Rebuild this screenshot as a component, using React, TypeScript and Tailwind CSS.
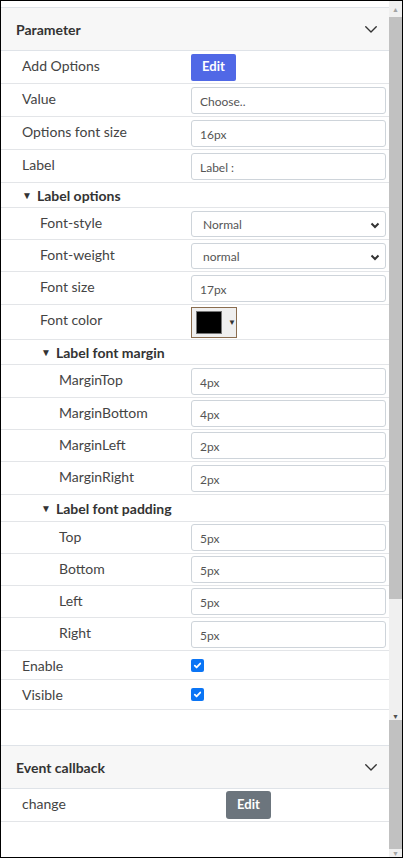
import type { ReactNode } from 'react'

const FONT = { fontFamily: 'Lato, "Noto Sans", sans-serif' }

function Chevron() {
  return (
    <svg width="14" height="14" viewBox="0 0 16 16" fill="none" stroke="#333" strokeWidth="1.6" strokeLinecap="round" strokeLinejoin="round">
      <path d="M2 5.5l6 6 6-6" />
    </svg>
  )
}

function SectionHeader({ title }: { title: string }) {
  return (
    <div className="flex h-[44px] items-center justify-between border-y border-[#dfe3e8] bg-[#f7f7f7] pl-[15px] pr-[11px]">
      <span className="text-[14px] font-bold text-[#333]">{title}</span>
      <Chevron />
    </div>
  )
}

function Row({ label, indent = 0, children, h = 'h-[33px]' }: {
  label: string; indent?: number; children?: ReactNode; h?: string
}) {
  const pad = indent === 0 ? 'pl-[21px]' : indent === 1 ? 'pl-[39px]' : 'pl-[58px]'
  return (
    <div className={`grid grid-cols-[190px_1fr] border-b border-[#e3e5e8] ${h}`}>
      <div className={`pt-[4px] text-[14px] text-[#444] ${pad}`}>{label}</div>
      <div className="flex items-center pr-[3px]">{children}</div>
    </div>
  )
}

function TextBox({ value }: { value: string }) {
  return (
    <div className="flex h-[27px] w-full items-center rounded-[3px] border border-[#ced4da] bg-white px-[8px] pt-[3px] text-[12px] text-[#555]">
      {value}
    </div>
  )
}

function SelectBox({ value }: { value: string }) {
  return (
    <div className="flex h-[26px] w-full items-center justify-between rounded-[3px] border border-[#ced4da] bg-white pl-[11px] pr-[5px] pt-[3px] text-[12px] text-[#555]">
      <span>{value}</span>
      <svg width="10" height="10" viewBox="0 0 10 10" fill="none" stroke="#333" strokeWidth="2">
        <path d="M1.5 3.5l3.5 3.5 3.5-3.5" />
      </svg>
    </div>
  )
}

function Group({ title, indent, h = 'h-[25px]' }: { title: string; indent: number; h?: string }) {
  return (
    <div className={`flex items-center gap-[5px] border-b border-[#e3e5e8] text-[14px] font-bold text-[#333] ${h} ${indent === 0 ? 'pl-[21px]' : 'pl-[40px]'}`}>
      <span className="text-[10px]">▼</span>
      <span>{title}</span>
    </div>
  )
}

function Check() {
  return (
    <span className="flex h-[13px] w-[13px] items-center justify-center rounded-[2px] bg-[#0b75f5]">
      <svg width="9" height="9" viewBox="0 0 10 10" fill="none" stroke="white" strokeWidth="2" strokeLinecap="round" strokeLinejoin="round">
        <path d="M2 5.2l2 2 4-4.4" />
      </svg>
    </span>
  )
}

export default function App() {
  return (
    <div className="flex h-[858px] w-[403px] overflow-hidden border border-black bg-white" style={FONT}>
      <div className="flex min-w-0 flex-1 flex-col pt-[6px]">
        <SectionHeader title="Parameter" />
        <Row label="Add Options">
          <button className="h-[27px] w-[45px] rounded-[2px] bg-[#5068e6] text-[13px] font-bold text-white">Edit</button>
        </Row>
        <Row label="Value"><TextBox value="Choose.." /></Row>
        <Row label="Options font size"><TextBox value="16px" /></Row>
        <Row label="Label"><TextBox value="Label :" /></Row>
        <Group title="Label options" indent={0} />
        <Row label="Font-style" indent={1} h="h-[32px]"><SelectBox value="Normal" /></Row>
        <Row label="Font-weight" indent={1} h="h-[32px]"><SelectBox value="normal" /></Row>
        <Row label="Font size" indent={1} h="h-[33px]"><TextBox value="17px" /></Row>
        <Row label="Font color" indent={1} h="h-[35px]">
          <div className="flex h-[31px] w-[46px] items-center gap-[6px] border border-[#8a6d4f] bg-[#efefef] pl-[4px]">
            <span className="h-[23px] w-[26px] border border-[#777] bg-black" />
            <span className="text-[8px] text-[#333]">▼</span>
          </div>
        </Row>
        <Group title="Label font margin" indent={1} />
        <Row label="MarginTop" indent={2} h="h-[33px]"><TextBox value="4px" /></Row>
        <Row label="MarginBottom" indent={2} h="h-[32px]"><TextBox value="4px" /></Row>
        <Row label="MarginLeft" indent={2} h="h-[32px]"><TextBox value="2px" /></Row>
        <Row label="MarginRight" indent={2} h="h-[33px]"><TextBox value="2px" /></Row>
        <Group title="Label font padding" indent={1} h="h-[27px]" />
        <Row label="Top" indent={2} h="h-[32px]"><TextBox value="5px" /></Row>
        <Row label="Bottom" indent={2} h="h-[32px]"><TextBox value="5px" /></Row>
        <Row label="Left" indent={2} h="h-[32px]"><TextBox value="5px" /></Row>
        <Row label="Right" indent={2} h="h-[33px]"><TextBox value="5px" /></Row>
        <Row label="Enable" h="h-[29px]"><Check /></Row>
        <Row label="Visible" h="h-[30px]"><Check /></Row>
        <div className="h-[35px]" />
        <SectionHeader title="Event callback" />
        <div className="grid h-[33px] grid-cols-[225px_1fr] border-b border-[#e3e5e8]">
          <div className="pl-[21px] pt-[4px] text-[14px] text-[#444]">change</div>
          <div className="flex items-center">
            <button className="h-[28px] w-[45px] rounded-[3px] bg-[#6c757d] text-[13px] font-bold text-white">Edit</button>
          </div>
        </div>
      </div>
      <div className="flex w-[13px] flex-col bg-[#f0f0f0]">
        <div className="flex h-[16px] items-center justify-center">
          <span className="text-[7px] leading-none text-[#a3a3a3]">▲</span>
        </div>
        <div className="h-[582px] bg-[#c1c1c1]" />
        <div className="flex-1" />
        <div className="flex h-[8px] items-center justify-center">
          <span className="text-[7px] leading-none text-[#505050]">▼</span>
        </div>
        <div className="h-[129px] bg-[#c1c1c1]" />
        <div className="flex h-[8px] items-center justify-center">
          <span className="text-[7px] leading-none text-[#a3a3a3]">▼</span>
        </div>
      </div>
    </div>
  )
}
